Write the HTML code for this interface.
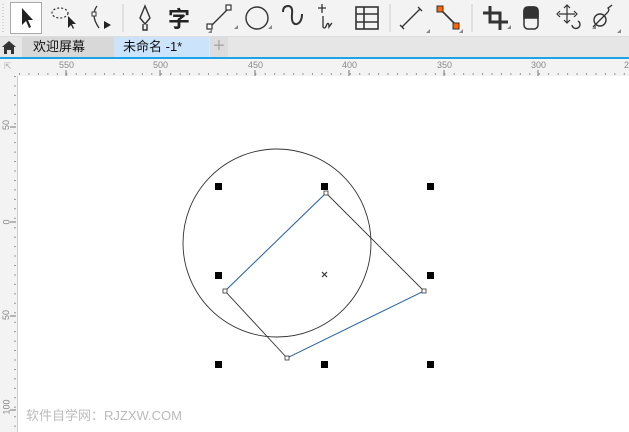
<html><head><style>
body{margin:0;width:629px;height:432px;overflow:hidden;background:#fff;font-family:"Liberation Sans","Noto Sans CJK SC",sans-serif;position:relative}
.tb{position:absolute;left:0;top:0;width:629px;height:36px;background:#f3f3f3;border-bottom:1px solid #ddd}
.tabs{position:absolute;left:0;top:37px;width:629px;height:20px;background:#e6e6e6}
.blue{position:absolute;left:0;top:57px;width:629px;height:2px;background:#1aa3e8}
.rt{position:absolute;left:0;top:59px;width:629px;height:17px;background:#f3f3f3}
.rl{position:absolute;left:0;top:59px;width:17px;height:373px;background:#f3f3f3}
.lab{position:absolute;font-size:9px;color:#888}
</style></head><body>
<div class="tb">
<svg width="629" height="36" style="position:absolute;left:0;top:0" fill="none" stroke="#333" stroke-width="1.6">
<line x1="3" y1="4" x2="3" y2="33" stroke="#ccc" stroke-dasharray="1 2"/>
<rect x="10.5" y="2.5" width="31" height="31" fill="#fff" stroke="#aaa" stroke-width="1"/>
<path d="M22 8 L22 25 L26 21 L29 28 L31 27 L28 20 L33 20 Z" fill="#222" stroke="none"/>
<ellipse cx="60" cy="13" rx="8" ry="5" stroke-dasharray="2 2" stroke-width="1.2"/>
<path d="M68 16 L68 28 L71 25 L73 29 L74 28 L72 24 L76 24Z" fill="#222" stroke="none"/>
<path d="M97 6 Q90 15 99 28" stroke-width="1.3"/><rect x="92" y="12" width="4" height="4" fill="#fff" stroke-width="1"/><path d="M104 21 L111 25 L104 29Z" fill="#222" stroke="none"/>
<line x1="123" y1="4" x2="123" y2="32" stroke="#ccc" stroke-width="1"/>
<path d="M145 6 L140 18 L145 24 L150 18 Z M143 24 L143 30 L147 30 L147 24" stroke-width="1.4"/>
<text x="168" y="27" font-size="22" font-weight="bold" fill="#222" stroke="none" font-family="Noto Sans CJK SC">字</text>
<line x1="210" y1="27" x2="228" y2="9" stroke-width="1.3"/><rect x="207" y="24" width="5" height="5" fill="#fff" stroke-width="1.2"/><rect x="226" y="5" width="5" height="5" fill="#fff" stroke-width="1.2"/>
<circle cx="257" cy="18" r="11" stroke-width="1.4"/>
<path d="M283 12 Q283 6 288 6 Q293 6 292 14 Q291 25 297 24 Q302 22 302 14" stroke-width="2"/>
<path d="M322 4 V13 M318 8 H326 M323 16 V27 Q325 30 327 24 Q329 22 329 27 Q331 24 332 23" stroke-width="1.3"/>
<rect x="356" y="7" width="22" height="22" stroke-width="1.6"/><path d="M356 14H378M356 22H378M364 7V29" stroke-width="1.6"/>
<line x1="390" y1="4" x2="390" y2="32" stroke="#ccc" stroke-width="1"/>
<line x1="402" y1="27" x2="420" y2="9" stroke-width="1.3"/><path d="M400 25L404 29M418 7L422 11" stroke-width="1.3"/>
<line x1="440" y1="9" x2="456" y2="25"/><rect x="437" y="6" width="6" height="6" fill="#f60" stroke-width="1"/><rect x="453" y="23" width="6" height="6" fill="#f60" stroke-width="1"/>
<line x1="472" y1="4" x2="472" y2="32" stroke="#ccc" stroke-width="1"/>
<path d="M483 13H500V30M490 6V22H508" stroke-width="3"/>
<rect x="524" y="7" width="14" height="22" rx="4" stroke-width="1.5"/><path d="M524 18H538V11Q538 7 534 7H528Q524 7 524 11Z" fill="#333"/>
<path d="M567 5V23M559 14H575M564 8L567 5L570 8M564 20L567 23L570 20M560 11L557 14L560 17M574 11L577 14L574 17" stroke-width="1.2"/><path d="M578 21 A4 4 0 1 1 572 25" stroke-width="1.4"/>
<circle cx="600" cy="20" r="6" stroke-width="1.4"/><path d="M593 27L607 13 Q610 10 608 8 Q611 6 612 5" stroke-width="1.3"/>
<path d="M234 29h4v-4z M268 29h4v-4z M507 29h4v-4z M592 29h4v-4z M426 33h4v-4z M459 33h4v-4z M617 33h4v-4z M208 33h4v-4z" fill="#888" stroke="none"/>
</svg></div>
<div class="tabs">
<svg width="16" height="16" style="position:absolute;left:1px;top:2px"><path d="M1 8 L8 2 L15 8 H13 V15 H10 V11 H6 V15 H3 V8Z" fill="#333"/></svg>
<div style="position:absolute;left:22px;top:0;width:92px;height:20px;background:#d8d8d8;font-size:13px;line-height:20px;padding-left:11px;box-sizing:border-box;color:#111">欢迎屏幕</div>
<div style="position:absolute;left:114px;top:0;width:95px;height:20px;background:#cce4fb;font-size:13px;line-height:20px;padding-left:9px;box-sizing:border-box;color:#111">未命名 -1*</div>
<div style="position:absolute;left:210px;top:0;width:18px;height:20px;background:#ddd;color:#aaa;font-size:20px;line-height:19px;text-align:center">+</div>
</div>
<div class="blue"></div>
<div class="rt"><svg width="629" height="17" style="position:absolute;left:0;top:0">
<g stroke="#777" stroke-width="1">
<path d="M66 11V17M160 11V17M255 11V17M349 11V17M444 11V17M538 11V17"/>
</g>
<path d="M19 15 H629" stroke="#999" stroke-dasharray="1 8.45" stroke-width="2"/>
</svg>
<span class="lab" style="left:59px;top:1px">550</span><span class="lab" style="left:153px;top:1px">500</span><span class="lab" style="left:248px;top:1px">450</span><span class="lab" style="left:342px;top:1px">400</span><span class="lab" style="left:437px;top:1px">350</span><span class="lab" style="left:531px;top:1px">300</span><span class="lab" style="left:624px;top:1px">2</span>
<span class="lab" style="left:4px;top:2px;color:#aaa">⇱</span>
</div>
<div class="rl" style="top:76px;height:356px"><svg width="17" height="356" style="position:absolute;left:0;top:0">
<path d="M10 51H16M10 146H16M10 240H16M10 334H16" stroke="#777"/>
<path d="M15 0V356" stroke="#999" stroke-dasharray="1 8.45" stroke-width="2"/>
</svg>
<span class="lab" style="left:1px;top:44px;transform:rotate(-90deg)">50</span>
<span class="lab" style="left:4px;top:141px;transform:rotate(-90deg)">0</span>
<span class="lab" style="left:1px;top:234px;transform:rotate(-90deg)">50</span>
<span class="lab" style="left:-1px;top:326px;transform:rotate(-90deg)">100</span>
</div>
<div style="position:absolute;left:17px;top:76px;width:1px;height:356px;background:#ccc"></div>
<svg width="629" height="432" style="position:absolute;left:0;top:0">
<circle cx="277" cy="243" r="94" fill="none" stroke="#333" stroke-width="0.9"/>
<path d="M326 193 L424 291 L287 358 L225 291 Z" fill="none" stroke="#333" stroke-width="0.9"/>
<path d="M225 291 L326 193 M424 291 L287 358" fill="none" stroke="#2a70b8" stroke-width="0.9"/>
<g fill="#fff" stroke="#333" stroke-width="0.8"><rect x="324" y="191" width="4" height="4"/><rect x="422" y="289" width="4" height="4"/><rect x="285" y="356" width="4" height="4"/><rect x="223" y="289" width="4" height="4"/></g>
<g fill="#000"><rect x="215" y="183" width="7" height="7"/><rect x="321" y="183" width="7" height="7"/><rect x="427" y="183" width="7" height="7"/><rect x="215" y="272" width="7" height="7"/><rect x="427" y="272" width="7" height="7"/><rect x="215" y="361" width="7" height="7"/><rect x="321" y="361" width="7" height="7"/><rect x="427" y="361" width="7" height="7"/></g>
<path d="M322 272L327 277M327 272L322 277" stroke="#333" stroke-width="1.2"/>
</svg>
<div style="position:absolute;left:26px;top:405px;font-size:13px;color:#bbb">软件自学网：RJZXW.COM</div>
</body></html>
